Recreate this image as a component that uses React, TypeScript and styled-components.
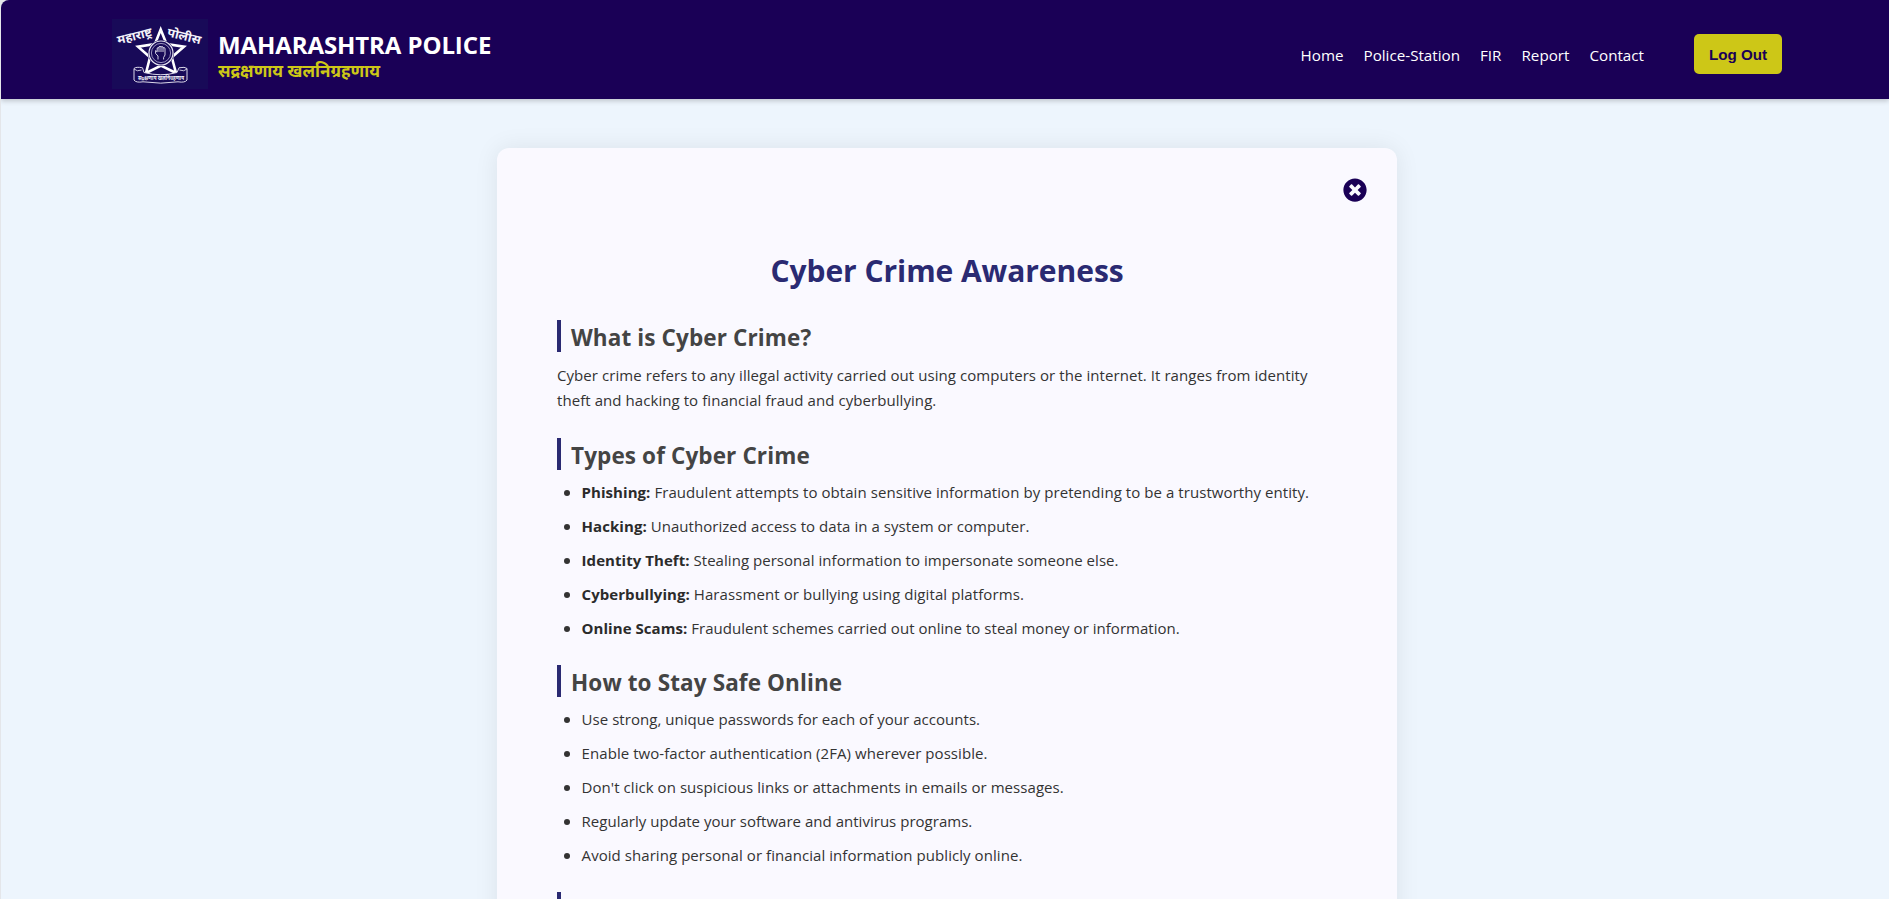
import React from "react";
import styled, { createGlobalStyle } from "styled-components";
import { FaTimesCircle } from "react-icons/fa";

const GlobalStyle = createGlobalStyle`
  * { box-sizing: border-box; }
  body {
    margin: 0;
    font-family: "Open Sans", "Noto Sans", sans-serif;
    background: #e4e6ea;
  }
`;

const Page = styled.div`
  height: 100vh;
  margin-left: 1px;
  overflow: hidden;
  background: #edf5fd;
  border-top-left-radius: 8px;
`;

const Header = styled.header`
  height: 99px;
  padding: 9px 107px 0 111px;
  display: flex;
  align-items: center;
  justify-content: space-between;
  background: #1a0056;
  box-shadow: 0 2px 5px rgba(0, 0, 0, 0.2);
`;

const Brand = styled.div`
  display: flex;
  align-items: center;
  gap: 10px;
`;

const BrandText = styled.div`
  display: flex;
  flex-direction: column;
  padding-top: 5px;
`;

const BrandName = styled.span`
  color: #fff;
  font-size: 24px;
  font-weight: 700;
  letter-spacing: -0.1px;
  line-height: 28px;
`;

const Motto = styled.span`
  color: #cdc717;
  font-family: "Noto Sans", sans-serif;
  font-size: 17px;
  font-weight: 700;
  line-height: 24px;
`;

const Right = styled.div`
  display: flex;
  align-items: center;
  gap: 50px;
`;

const Nav = styled.nav`
  display: flex;
  gap: 20px;
  padding-top: 2px;
`;

const NavLink = styled.a`
  color: #fff;
  font-size: 15.2px;
  font-weight: 500;
  line-height: 24px;
`;

const LogoutButton = styled.button`
  width: 88px;
  height: 40px;
  padding: 0;
  border: 0;
  border-radius: 5px;
  background: #cdc717;
  color: #1a0056;
  font: 700 15.2px "Liberation Sans", sans-serif;
`;

const Main = styled.main`
  padding: 49px 0 0 4px;
  display: flex;
  justify-content: center;
`;

const Card = styled.article`
  width: 900px;
  padding: 30px;
  border-radius: 12px;
  background: #faf9ff;
  box-shadow: 0 0 25px rgba(0, 0, 0, 0.08);
`;

const CardTop = styled.div`
  display: flex;
  justify-content: flex-end;
`;

const CloseButton = styled.button`
  display: flex;
  padding: 0;
  border: 0;
  background: none;
  color: #1a0056;
  font-size: 24px;
`;

const Body = styled.div`
  padding: 45px 30px 0;
`;

const Title = styled.h1`
  margin: 0 0 25px;
  color: #2a2a72;
  font-size: 30px;
  letter-spacing: -0.05px;
  line-height: 48px;
  text-align: center;
`;

const SectionTitle = styled.h2`
  height: 32px;
  margin: 0 0 9px;
  padding: 2px 0 0 10px;
  border-left: 4px solid #2a2a72;
  color: #444;
  font-size: 22.5px;
  letter-spacing: 0.12px;
  line-height: 31px;
`;

const Paragraph = styled.p`
  margin: 0 0 25px;
  padding-top: 2px;
  color: #333;
  font-size: 15px;
  letter-spacing: 0.067px;
  line-height: 25px;
`;

const List = styled.ul`
  display: flex;
  flex-direction: column;
  gap: 8px;
  margin: 0 0 24px;
  padding: 0 0 0 7px;
  list-style: none;
`;

const Item = styled.li<{ $tracking?: number }>`
  display: flex;
  color: #333;
  font-size: 15px;
  letter-spacing: ${(p) => p.$tracking ?? 0.05}px;
  line-height: 26px;

  &::before {
    content: "";
    width: 6px;
    height: 6px;
    margin: 11px 11.6px 0 0;
    border-radius: 50%;
    background: #333;
  }
`;

const Label = styled.strong`
  color: #2b2b2b;
  letter-spacing: 0.05px;
`;

const Crest = () => (
  <svg width="96" height="70" viewBox="0 0 96 70" fill="none">
    <rect width="96" height="70" fill="#180a58" />
    <path
      d="M48.7 10.5 L54.5 25 L72 27.6 L59.8 38.3 L64 54 L49 46.6 L34 54 L38 38.3 L26 27.6 L43 25 Z"
      stroke="#fff"
      strokeWidth="2.6"
    />
    <circle cx="49" cy="34" r="13" fill="#180a58" />
    <circle cx="49" cy="34" r="12" stroke="#e8e6f2" strokeWidth="1.2" />
    <circle cx="49" cy="34" r="9.6" stroke="#b9b4d4" strokeWidth="0.8" />
    <path
      d="M46 40.5 V37 L43.6 34.5 V31.5 L45.2 32.8 V29 Q46.2 28 47 29 V33 M47 29 V27.8 Q48 26.8 49 27.8 V33 M49 28 Q50 27 51 28 V33 M51 29 Q52 28 53 29.2 V36 L51.6 38.5 V40.5"
      stroke="#e8e6f2"
      strokeWidth="0.9"
    />
    <path
      d="M22 49.5 Q24 47.5 30.5 48.8 L32 53.5 Q49 58 65 53.5 L67 48.8 Q73 47.5 75 49.5 V61 Q73 64 66 62.8 Q49 65.5 31 62.8 Q24 64 22 61 Z"
      fill="#180a58"
      stroke="#dcd9ea"
      strokeWidth="1"
    />
    <path
      d="M22 50 Q25 53 29.5 51 M75 50 Q72 53 67.5 51"
      stroke="#dcd9ea"
      strokeWidth="0.9"
    />
    <g fill="#f4f3fa" fontFamily="'Noto Sans', sans-serif" fontWeight="700">
      <text fontSize="12" textLength="35.5" lengthAdjust="spacingAndGlyphs" transform="translate(6.3 25.3) rotate(-14)">
        महाराष्ट्र
      </text>
      <text fontSize="12" textLength="34.5" lengthAdjust="spacingAndGlyphs" transform="translate(54.5 17) rotate(14)">
        पोलीस
      </text>
      <text x="26" y="61.3" fontSize="5.5" textLength="46" lengthAdjust="spacingAndGlyphs">
        सद्रक्षणाय खलनिग्रहणाय
      </text>
    </g>
  </svg>
);

const links = ["Home", "Police-Station", "FIR", "Report", "Contact"];

const types: { label: string; text: string; tracking: number }[] = [
  { label: "Phishing:", text: "Fraudulent attempts to obtain sensitive information by pretending to be a trustworthy entity.", tracking: 0.065 },
  { label: "Hacking:", text: "Unauthorized access to data in a system or computer.", tracking: 0.05 },
  { label: "Identity Theft:", text: "Stealing personal information to impersonate someone else.", tracking: 0.04 },
  { label: "Cyberbullying:", text: "Harassment or bullying using digital platforms.", tracking: 0.09 },
  { label: "Online Scams:", text: "Fraudulent schemes carried out online to steal money or information.", tracking: 0.03 },
];

const tips: { text: string; tracking: number }[] = [
  { text: "Use strong, unique passwords for each of your accounts.", tracking: 0.04 },
  { text: "Enable two-factor authentication (2FA) wherever possible.", tracking: 0.06 },
  { text: "Don't click on suspicious links or attachments in emails or messages.", tracking: 0.055 },
  { text: "Regularly update your software and antivirus programs.", tracking: 0.02 },
  { text: "Avoid sharing personal or financial information publicly online.", tracking: 0.06 },
];

export default function App() {
  return (
    <>
      <GlobalStyle />
      <Page>
        <Header>
          <Brand>
            <Crest />
            <BrandText>
              <BrandName>MAHARASHTRA POLICE</BrandName>
              <Motto>सद्रक्षणाय खलनिग्रहणाय</Motto>
            </BrandText>
          </Brand>
          <Right>
            <Nav>
              {links.map((link) => (
                <NavLink key={link}>{link}</NavLink>
              ))}
            </Nav>
            <LogoutButton>Log Out</LogoutButton>
          </Right>
        </Header>
        <Main>
          <Card>
            <CardTop>
              <CloseButton aria-label="Close">
                <FaTimesCircle />
              </CloseButton>
            </CardTop>
            <Body>
              <Title>Cyber Crime Awareness</Title>
              <SectionTitle>What is Cyber Crime?</SectionTitle>
              <Paragraph>
                Cyber crime refers to any illegal activity carried out using computers or the internet. It ranges from
                identity theft and hacking to financial fraud and cyberbullying.
              </Paragraph>
              <SectionTitle>Types of Cyber Crime</SectionTitle>
              <List>
                {types.map(({ label, text, tracking }) => (
                  <Item key={label} $tracking={tracking}>
                    <span>
                      <Label>{label}</Label> {text}
                    </span>
                  </Item>
                ))}
              </List>
              <SectionTitle>How to Stay Safe Online</SectionTitle>
              <List>
                {tips.map(({ text, tracking }) => (
                  <Item key={text} $tracking={tracking}>
                    <span>{text}</span>
                  </Item>
                ))}
              </List>
              <SectionTitle />
            </Body>
          </Card>
        </Main>
      </Page>
    </>
  );
}
